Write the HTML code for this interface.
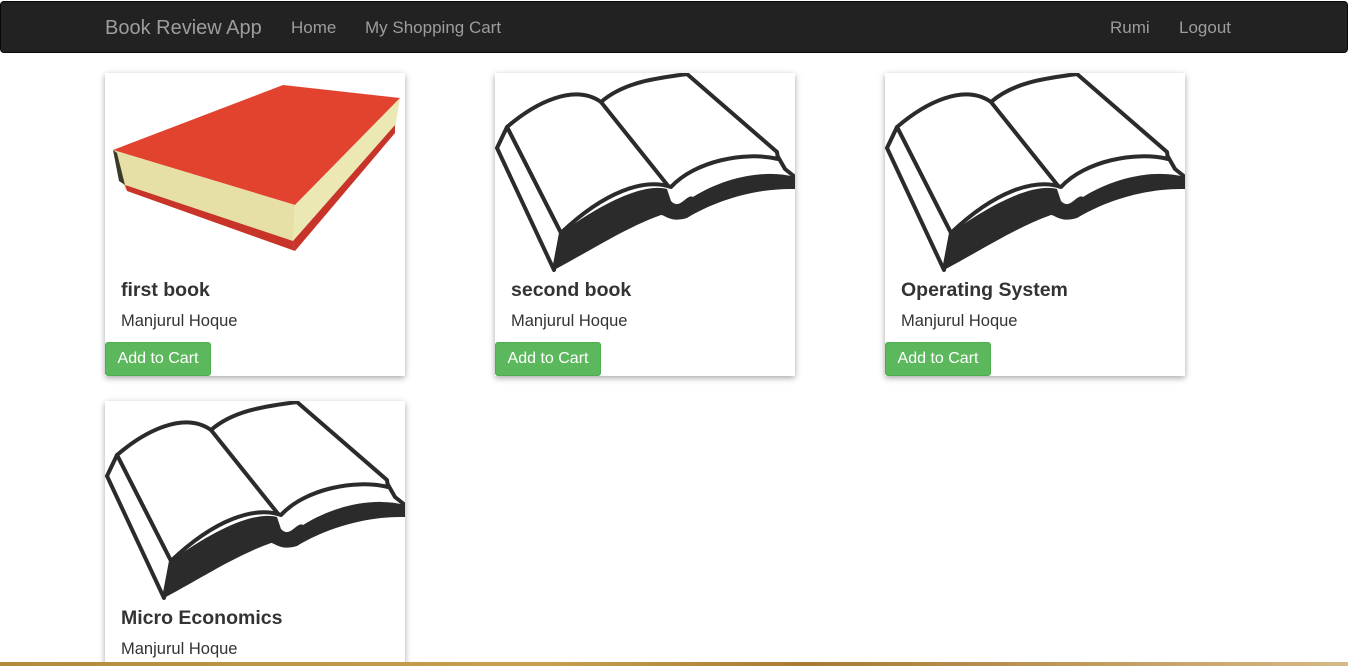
<!DOCTYPE html>
<html><head><meta charset="utf-8"><style>
*{box-sizing:border-box;margin:0;padding:0}
html,body{width:1348px;height:666px;overflow:hidden}
body{background:#fff;font-family:"Liberation Sans",sans-serif;position:relative}
.nav{position:absolute;left:0;top:1px;width:1348px;height:52px;background:#222;border:1px solid #080808;border-radius:4px}
.nav span{position:absolute;top:16px;color:#9d9d9d;font-size:17px}
.brand{font-size:20px!important;top:15px!important}
.card{position:absolute;width:300px;background:#fff;box-shadow:0 2px 6px rgba(0,0,0,.35)}
.img{height:200px;overflow:hidden;display:block}
.t{position:absolute;left:16px;font-size:19.5px;font-weight:bold;color:#333}
.a{position:absolute;left:16px;font-size:16.5px;color:#333}
.btn{position:absolute;left:0;width:106px;height:34px;background:#5cb85c;border:1px solid #4cae4c;border-radius:3px;color:#fff;font-size:16px;text-align:center;line-height:32px}
.bar{position:absolute;left:0;top:662px;width:1348px;height:4px;background:linear-gradient(90deg,#b08a3c,#c9a050 40%,#a77a30 60%,#d6b987)}
</style></head><body>
<div class="nav">
<span class="brand" style="left:104px">Book Review App</span>
<span style="left:290px">Home</span>
<span style="left:364px">My Shopping Cart</span>
<span style="left:1109px">Rumi</span>
<span style="left:1178px">Logout</span>
</div>

<div class="card" style="left:105px;top:73px;height:303px">
<svg class="img" width="300" height="200" viewBox="0 0 300 200">
<polygon points="8,77 178,12 295,25 190,132" fill="#e2432e"/>
<polygon points="8,77 190,132 188,170 20,116 10,85" fill="#e6e0a6"/>
<polygon points="190,132 295,25 290,55 188,170" fill="#ece8b4"/>
<polygon points="20,112 188,168 190,178 22,118" fill="#c8332a"/>
<polygon points="188,168 290,52 290,60 190,178" fill="#c8332a"/>
<polygon points="8,77 12,80 20,112 14,108" fill="#3a3a2a"/>
</svg>
<div class="t" style="top:206px">first book</div>
<div class="a" style="top:239px">Manjurul Hoque</div>
<div class="btn" style="top:269px">Add to Cart</div>
</div>

<div class="card" style="left:495px;top:73px;height:303px">
<svg class="img" width="300" height="200" viewBox="0 0 300 200"><path d="M59,197 L66,160 C110,128 150,110 172,116 L176,128 C185,138 192,120 198,124 C230,104 270,96 300,104 L300,116 C260,115 220,128 192,145 C176,150 170,142 166,142 C130,155 100,175 59,197 Z" fill="#2b2b2b"/><g fill="none" stroke="#2b2b2b" stroke-width="4" stroke-linejoin="round">
<path d="M12,54 C40,30 79,10 106,29 C130,8 165,5 192,1 L282,79 L283,86 C250,78 200,88 176,114 C150,105 110,118 66,160 Z" fill="#fff"/>
<path d="M106,29 L174,114"/>
<path d="M12,54 L2,75 L59,197 L66,160 Z" fill="#fff"/>
<path d="M282,82 L290,96 L300,104"/>
</g></svg>
<div class="t" style="top:206px">second book</div>
<div class="a" style="top:239px">Manjurul Hoque</div>
<div class="btn" style="top:269px">Add to Cart</div>
</div>

<div class="card" style="left:885px;top:73px;height:303px">
<svg class="img" width="300" height="200" viewBox="0 0 300 200"><path d="M59,197 L66,160 C110,128 150,110 172,116 L176,128 C185,138 192,120 198,124 C230,104 270,96 300,104 L300,116 C260,115 220,128 192,145 C176,150 170,142 166,142 C130,155 100,175 59,197 Z" fill="#2b2b2b"/><g fill="none" stroke="#2b2b2b" stroke-width="4" stroke-linejoin="round">
<path d="M12,54 C40,30 79,10 106,29 C130,8 165,5 192,1 L282,79 L283,86 C250,78 200,88 176,114 C150,105 110,118 66,160 Z" fill="#fff"/>
<path d="M106,29 L174,114"/>
<path d="M12,54 L2,75 L59,197 L66,160 Z" fill="#fff"/>
<path d="M282,82 L290,96 L300,104"/>
</g></svg>
<div class="t" style="top:206px">Operating System</div>
<div class="a" style="top:239px">Manjurul Hoque</div>
<div class="btn" style="top:269px">Add to Cart</div>
</div>

<div class="card" style="left:105px;top:401px;height:265px">
<svg class="img" width="300" height="200" viewBox="0 0 300 200"><path d="M59,197 L66,160 C110,128 150,110 172,116 L176,128 C185,138 192,120 198,124 C230,104 270,96 300,104 L300,116 C260,115 220,128 192,145 C176,150 170,142 166,142 C130,155 100,175 59,197 Z" fill="#2b2b2b"/><g fill="none" stroke="#2b2b2b" stroke-width="4" stroke-linejoin="round">
<path d="M12,54 C40,30 79,10 106,29 C130,8 165,5 192,1 L282,79 L283,86 C250,78 200,88 176,114 C150,105 110,118 66,160 Z" fill="#fff"/>
<path d="M106,29 L174,114"/>
<path d="M12,54 L2,75 L59,197 L66,160 Z" fill="#fff"/>
<path d="M282,82 L290,96 L300,104"/>
</g></svg>
<div class="t" style="top:206px">Micro Economics</div>
<div class="a" style="top:239px">Manjurul Hoque</div>
</div>
<div class="bar"></div>
</body></html>
